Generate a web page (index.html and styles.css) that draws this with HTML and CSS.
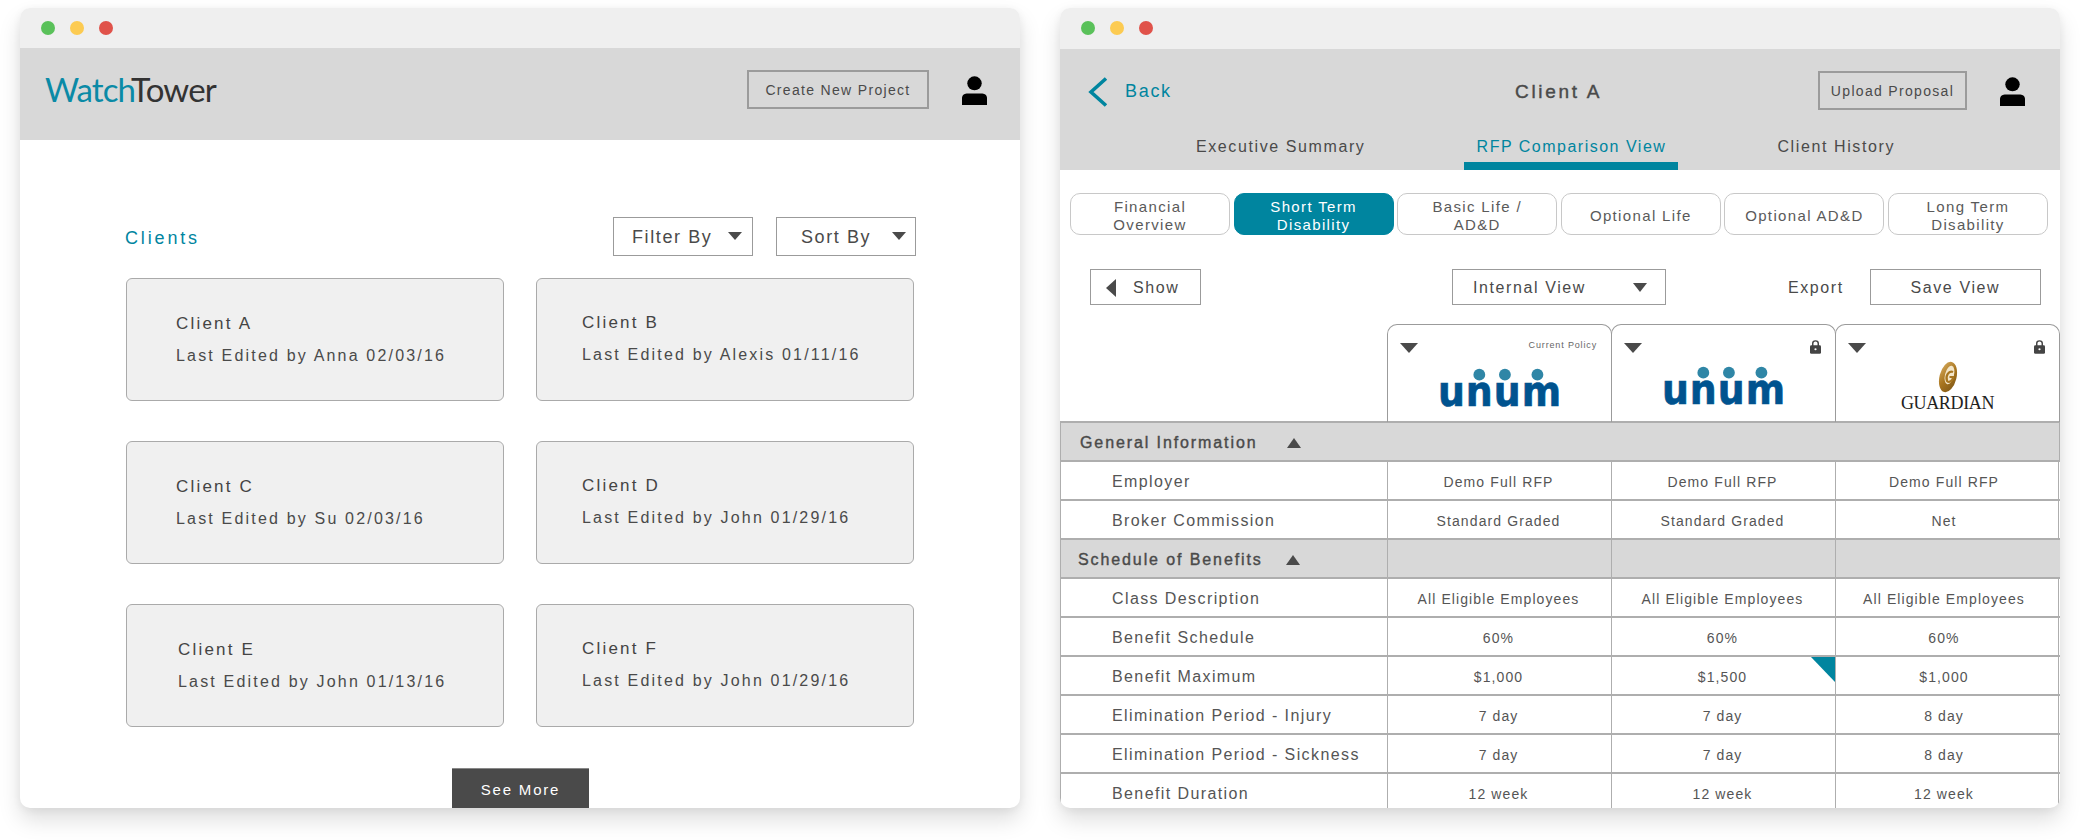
FILE: index.html
```html
<!DOCTYPE html>
<html lang="en">
<head>
<meta charset="utf-8">
<title>WatchTower</title>
<link rel="stylesheet" href="styles.css">
</head>
<body>
<div class="page">

  <section class="window">
    <div class="titlebar"><i class="light green"></i><i class="light yellow"></i><i class="light red"></i></div>
    <header class="head-left">
      <div class="logo"><span class="logo-a">Watch</span><span class="logo-b">Tower</span></div>
      <button class="btn-outline btn-create">Create New Project</button>
      <svg class="user" viewBox="0 0 26 30"><ellipse cx="13" cy="7.5" rx="7.5" ry="7.2"/><path d="M0 30V23C0 19 3 18 6 18H20C23 18 26 19 26 23V30Z"/></svg>
    </header>
    <main class="clients">
      <div class="clients-bar">
        <h2 class="clients-title">Clients</h2>
        <div class="select select-filter"><span>Filter By</span><i class="tri-down"></i></div>
        <div class="select select-sort"><span>Sort By</span><i class="tri-down"></i></div>
      </div>
      <div class="cards">
        <article class="card"><h3>Client A</h3><p>Last Edited by Anna 02/03/16</p></article>
        <article class="card card-right card-up"><h3>Client B</h3><p>Last Edited by Alexis 01/11/16</p></article>
        <article class="card"><h3>Client C</h3><p>Last Edited by Su 02/03/16</p></article>
        <article class="card card-right card-up"><h3>Client D</h3><p>Last Edited by John 01/29/16</p></article>
        <article class="card card-shift"><h3>Client E</h3><p>Last Edited by John 01/13/16</p></article>
        <article class="card card-right card-up"><h3>Client F</h3><p>Last Edited by John 01/29/16</p></article>
      </div>
      <button class="see-more">See More</button>
    </main>
  </section>

  <section class="window">
    <div class="titlebar titlebar-tall"><i class="light green"></i><i class="light yellow"></i><i class="light red"></i></div>
    <header class="head-right">
      <div class="head-top">
        <a class="back"><svg class="chevron" viewBox="0 0 20 30"><path d="M18 1.5L3 15L18 28.5"/></svg><span>Back</span></a>
        <h1 class="client-name">Client A</h1>
        <button class="btn-outline btn-upload">Upload Proposal</button>
        <svg class="user" viewBox="0 0 26 30"><ellipse cx="13" cy="7.5" rx="7.5" ry="7.2"/><path d="M0 30V23C0 19 3 18 6 18H20C23 18 26 19 26 23V30Z"/></svg>
      </div>
      <nav class="tabs">
        <a class="tab">Executive Summary</a>
        <a class="tab tab-active">RFP Comparison View</a>
        <a class="tab">Client History</a>
      </nav>
    </header>
    <div class="pills">
      <div class="pill">Financial<br>Overview</div>
      <div class="pill pill-active">Short Term<br>Disability</div>
      <div class="pill">Basic Life /<br>AD&amp;D</div>
      <div class="pill">Optional Life</div>
      <div class="pill">Optional AD&amp;D</div>
      <div class="pill">Long Term<br>Disability</div>
    </div>
    <div class="view-bar">
      <div class="box box-show"><i class="tri-left"></i><span>Show</span></div>
      <div class="box box-view"><span>Internal View</span><i class="tri-down"></i></div>
      <span class="export">Export</span>
      <div class="box box-save">Save View</div>
    </div>

    <div class="compare">
      <div class="row row-logos">
        <div></div>
        <div class="plan">
          <div class="plan-top"><i class="tri-plan"></i><span class="policy">Current Policy</span></div>
          <svg class="unum" viewBox="-6 -20 132 74"><circle cx="39" cy="7" r="6"/><circle cx="65" cy="7" r="6"/><circle cx="98" cy="7" r="6"/><text x="-3" y="39" textLength="126" lengthAdjust="spacingAndGlyphs">unum</text></svg>
        </div>
        <div class="plan">
          <div class="plan-top"><i class="tri-plan"></i><svg class="lock" viewBox="0 0 12 16"><path class="lock-ring" d="M3 8V4.5C3 1 9 1 9 4.5V8"/><rect y="6.5" width="12" height="9.5" rx="1.5"/><circle class="lock-hole" cx="6" cy="11" r="1.2"/></svg></div>
          <svg class="unum unum-up" viewBox="-6 -20 132 74"><circle cx="39" cy="7" r="6"/><circle cx="65" cy="7" r="6"/><circle cx="98" cy="7" r="6"/><text x="-3" y="39" textLength="126" lengthAdjust="spacingAndGlyphs">unum</text></svg>
        </div>
        <div class="plan">
          <div class="plan-top"><i class="tri-plan"></i><svg class="lock" viewBox="0 0 12 16"><path class="lock-ring" d="M3 8V4.5C3 1 9 1 9 4.5V8"/><rect y="6.5" width="12" height="9.5" rx="1.5"/><circle class="lock-hole" cx="6" cy="11" r="1.2"/></svg></div>
          <div class="guardian">
            <svg class="swirl" viewBox="0 0 24 32"><defs><linearGradient id="gold" x1="0" y1="0" x2="1" y2="1"><stop offset="0" stop-color="#d9ae62"/><stop offset=".5" stop-color="#a8751f"/><stop offset="1" stop-color="#7a5416"/></linearGradient></defs><ellipse cx="12" cy="16" rx="8.5" ry="15.5" fill="url(#gold)" transform="rotate(14 12 16)"/><ellipse cx="13.5" cy="14" rx="4.5" ry="9.5" fill="#f3e6c9" transform="rotate(14 13.5 14)"/><path d="M17 11C13 9 9 15 11 20C13 22 17 20 17 16L13.5 16" fill="none" stroke="#a8751f" stroke-width="2.2"/></svg>
            <span class="guardian-name">GUARDIAN</span>
          </div>
        </div>
      </div>

      <div class="row row-section row-merged"><div class="cell-label">General Information<i class="tri-up"></i></div></div>
      <div class="row"><div class="cell-name">Employer</div><div class="cell">Demo Full RFP</div><div class="cell">Demo Full RFP</div><div class="cell cell-last">Demo Full RFP</div></div>
      <div class="row"><div class="cell-name">Broker Commission</div><div class="cell">Standard Graded</div><div class="cell">Standard Graded</div><div class="cell cell-last">Net</div></div>
      <div class="row row-section"><div class="cell-label cell-label-alt">Schedule of Benefits<i class="tri-up"></i></div><div class="cell"></div><div class="cell"></div><div class="cell"></div></div>
      <div class="row"><div class="cell-name">Class Description</div><div class="cell">All Eligible Employees</div><div class="cell">All Eligible Employees</div><div class="cell cell-last">All Eligible Employees</div></div>
      <div class="row"><div class="cell-name">Benefit Schedule</div><div class="cell">60%</div><div class="cell">60%</div><div class="cell cell-last">60%</div></div>
      <div class="row"><div class="cell-name">Benefit Maximum</div><div class="cell">$1,000</div><div class="cell cell-flag">$1,500</div><div class="cell cell-last">$1,000</div></div>
      <div class="row"><div class="cell-name">Elimination Period - Injury</div><div class="cell">7 day</div><div class="cell">7 day</div><div class="cell cell-last">8 day</div></div>
      <div class="row"><div class="cell-name">Elimination Period - Sickness</div><div class="cell">7 day</div><div class="cell">7 day</div><div class="cell cell-last">8 day</div></div>
      <div class="row"><div class="cell-name">Benefit Duration</div><div class="cell">12 week</div><div class="cell">12 week</div><div class="cell cell-last">12 week</div></div>
    </div>
  </section>

</div>
</body>
</html>
```

FILE: styles.css
```css
* { box-sizing: border-box; }
html, body { margin: 0; padding: 0; background: #fff; }
body { font-family: "Liberation Sans", Arial, sans-serif; color: #4a4a4a; overflow: hidden; }
h1, h2, h3, p { margin: 0; font-weight: 400; }
i { display: block; }
button { font-family: inherit; cursor: pointer; }

.page { display: flex; gap: 40px; padding: 8px 20px 0; width: 2080px; height: 840px; }

.window { width: 1000px; height: 800px; border-radius: 10px; overflow: hidden; background: #fff; box-shadow: 0 12px 22px rgba(0,0,0,.13), 0 2px 8px rgba(0,0,0,.06); }

.titlebar { height: 40px; background: #efefef; display: flex; align-items: center; gap: 15px; padding-left: 21px; }
.titlebar-tall { height: 41px; padding-bottom: 2px; }
.light { width: 14px; height: 14px; border-radius: 50%; }
.green { background: #5ac15a; }
.yellow { background: #fccb52; }
.red { background: #e0524a; }

/* left window header */
.head-left { height: 92px; background: #d8d8d8; display: flex; align-items: flex-start; padding: 22px 33px 0 25px; }
.logo { font-family: Lato, sans-serif; font-weight: 400; font-size: 33px; line-height: 38px; letter-spacing: -.85px; }
.logo-a { color: #0a8aa6; }
.logo-b { color: #333; }
.btn-outline { background: transparent; border: 2px solid #9b9b9b; color: #4a4a4a; font-size: 14px; letter-spacing: 1.32px; height: 39px; padding: 0; }
.btn-create { width: 182px; margin-left: auto; margin-right: 33px; }
.user { width: 25px; height: 29px; fill: #000; margin-top: 6px; flex: none; }

/* clients */
.clients { padding: 77px 0 0 106px; }
.clients-bar { display: flex; align-items: center; width: 790px; height: 39px; }
.clients-title { color: #00859f; font-size: 18px; letter-spacing: 2.85px; margin: 0 auto 0 -1px; padding-top: 3px; }
.select { display: flex; align-items: center; height: 39px; width: 140px; border: 1px solid #9b9b9b; font-size: 18px; letter-spacing: 1.6px; padding-top: 1px; }
.select-filter { padding-left: 18px; gap: 16px; }
.select-sort { margin-left: 23px; padding-left: 24px; gap: 21px; }
.tri-down { width: 0; height: 0; border-left: 7px solid transparent; border-right: 7px solid transparent; border-top: 8px solid #4a4a4a; margin-top: -2px; }

.cards { display: grid; grid-template-columns: 378px 378px; grid-auto-rows: 123px; gap: 40px 32px; margin-top: 22px; }
.card { background: #f0f0f0; border: 1px solid #aaa; border-radius: 6px; padding: 34px 0 0 49px; }
.card h3 { font-size: 17px; line-height: 22px; letter-spacing: 2.2px; color: #444; }
.card p { font-size: 16px; line-height: 20px; letter-spacing: 2.18px; margin-top: 11px; }
.card-right { padding-left: 45px; }
.card-up { padding-top: 33px; }
.card-shift { padding-left: 51px; }
.see-more { display: block; width: 137px; height: 44px; margin: 41px 0 0 326px; background: #4a4a4a; color: #fff; border: 0; border-top: 1px solid #888; font-size: 15px; letter-spacing: 1.8px; padding: 0 0 2px; }

/* right window header */
.head-right { height: 121px; background: #d8d8d8; }
.head-top { display: flex; align-items: flex-start; height: 81px; padding: 22px 35px 0 29px; }
.back { display: flex; align-items: center; gap: 17px; color: #00859f; font-size: 18px; letter-spacing: 1.7px; height: 39px; width: 83px; padding-top: 2px; }
.chevron { width: 20px; height: 30px; fill: none; stroke: #00859f; stroke-width: 3.6; flex: none; margin-top: 0; margin-left: -1px; }
.client-name { flex: none; white-space: nowrap; font-size: 19px; line-height: 39px; letter-spacing: 2.7px; color: #4a4a4a; -webkit-text-stroke: .4px #4a4a4a; margin-left: 343px; padding-top: 1px; }
.btn-upload { width: 149px; flex: none; margin-left: auto; margin-right: 33px; }
.tabs { display: flex; padding-left: 136px; height: 40px; }
.tab { font-size: 16px; letter-spacing: 1.6px; height: 40px; padding-top: 7px; line-height: 20px; color: #4a4a4a; }
.tab-active { color: #00859f; border-bottom: 8px solid #00859f; width: 214px; text-align: center; letter-spacing: 1.5px; margin: 0 99px; }

/* pills */
.pills { display: flex; gap: 3.6px; padding: 23px 0 0 10px; }
.pill { width: 160px; height: 42px; display: flex; align-items: center; justify-content: center; text-align: center; border: 1px solid #c8c8c8; border-radius: 10px; font-size: 15px; line-height: 18px; letter-spacing: 1.35px; color: #5a5a5a; padding-top: 3px; }
.pill-active { background: #00859f; border-color: #00859f; color: #fff; }

/* view toolbar */
.view-bar { display: flex; align-items: center; height: 36px; margin-top: 34px; padding-left: 30px; }
.box { display: flex; align-items: center; height: 36px; border: 1px solid #9b9b9b; font-size: 16px; letter-spacing: 1.6px; padding-top: 2px; }
.box-show { width: 111px; padding-left: 15px; gap: 17px; }
.tri-left { width: 0; height: 0; border-top: 9px solid transparent; border-bottom: 9px solid transparent; border-right: 10px solid #4a4a4a; }
.box-view { width: 214px; margin-left: 251px; padding-left: 20px; gap: 47px; }
.box-view .tri-down { border-top-width: 9px; }
.export { font-size: 16px; letter-spacing: 1.6px; margin-left: 122px; padding-top: 2px; }
.box-save { width: 171px; margin-left: 26px; justify-content: center; }

/* comparison table */
.compare { margin-top: 19px; font-size: 14px; letter-spacing: 1.1px; }
.row { display: grid; grid-template-columns: 326px 224px 224px 224px; height: 39px; border-bottom: 2px solid #aeaeae; border-left: 1px solid #aeaeae; }
.row-logos { grid-template-columns: 327px 224px 224px 224px; height: 99px; border-left: 0; }
.plan { height: 98px; border: 1px solid #9b9b9b; border-bottom: 0; border-radius: 10px 10px 0 0; margin-right: -1px; display: flex; flex-direction: column; align-items: center; position: relative; }
.plan-top { display: flex; justify-content: space-between; align-items: flex-start; align-self: stretch; padding: 14px 12px 0 12px; height: 36px; }
.tri-plan { width: 0; height: 0; border-left: 9px solid transparent; border-right: 9px solid transparent; border-top: 10px solid #4a4a4a; margin-top: 4px; }
.policy { font-size: 9px; letter-spacing: .85px; color: #666; line-height: 12px; margin-right: 2px; }
.lock { width: 11px; height: 15px; fill: #444; margin-right: 2px; }
.lock-ring { fill: none; stroke: #444; stroke-width: 1.6; }
.lock-hole { fill: #fff; }
.unum { width: 130px; height: 73px; margin-top: -13px; flex: none; overflow: visible; }
.unum circle { fill: #2f86a6; }
.unum text { font-family: "DejaVu Sans", sans-serif; font-weight: 700; font-size: 43px; fill: #00538f; stroke: #00538f; stroke-width: .7px; }
.unum-up { margin-top: -15px; }
.guardian { display: flex; flex-direction: column; align-items: center; }
.swirl { width: 24px; height: 32px; display: block; margin-left: 2px; }
.guardian-name { font-family: "Liberation Serif", serif; font-size: 18px; letter-spacing: -.35px; line-height: 20px; color: #222; }

.row-section { background: #d8d8d8; }
.row-merged { border-right: 1px solid #aeaeae; }
.cell-label { display: flex; align-items: center; padding: 2px 0 0 19px; font-size: 16px; letter-spacing: 1.9px; color: #4a4a4a; -webkit-text-stroke: .4px #4a4a4a; }
.cell-label-alt { padding-left: 17px; }
.tri-up { width: 0; height: 0; border-left: 7px solid transparent; border-right: 7px solid transparent; border-bottom: 10px solid #4a4a4a; margin-left: 29px; }
.cell-label-alt .tri-up { margin-left: 23px; }
.cell-name { display: flex; align-items: center; padding: 2px 0 0 51px; font-size: 16px; letter-spacing: 1.4px; color: #555; }
.cell { display: flex; align-items: center; justify-content: center; padding: 2px 2px 0 0; border-left: 1px solid #aeaeae; color: #555; position: relative; }
.cell-last { padding-right: 6px; border-right: 1px solid #aeaeae; }
.cell-flag::after { content: ""; position: absolute; top: 0; right: 0; width: 0; height: 0; border-top: 25px solid #00859f; border-left: 24px solid transparent; }
```
